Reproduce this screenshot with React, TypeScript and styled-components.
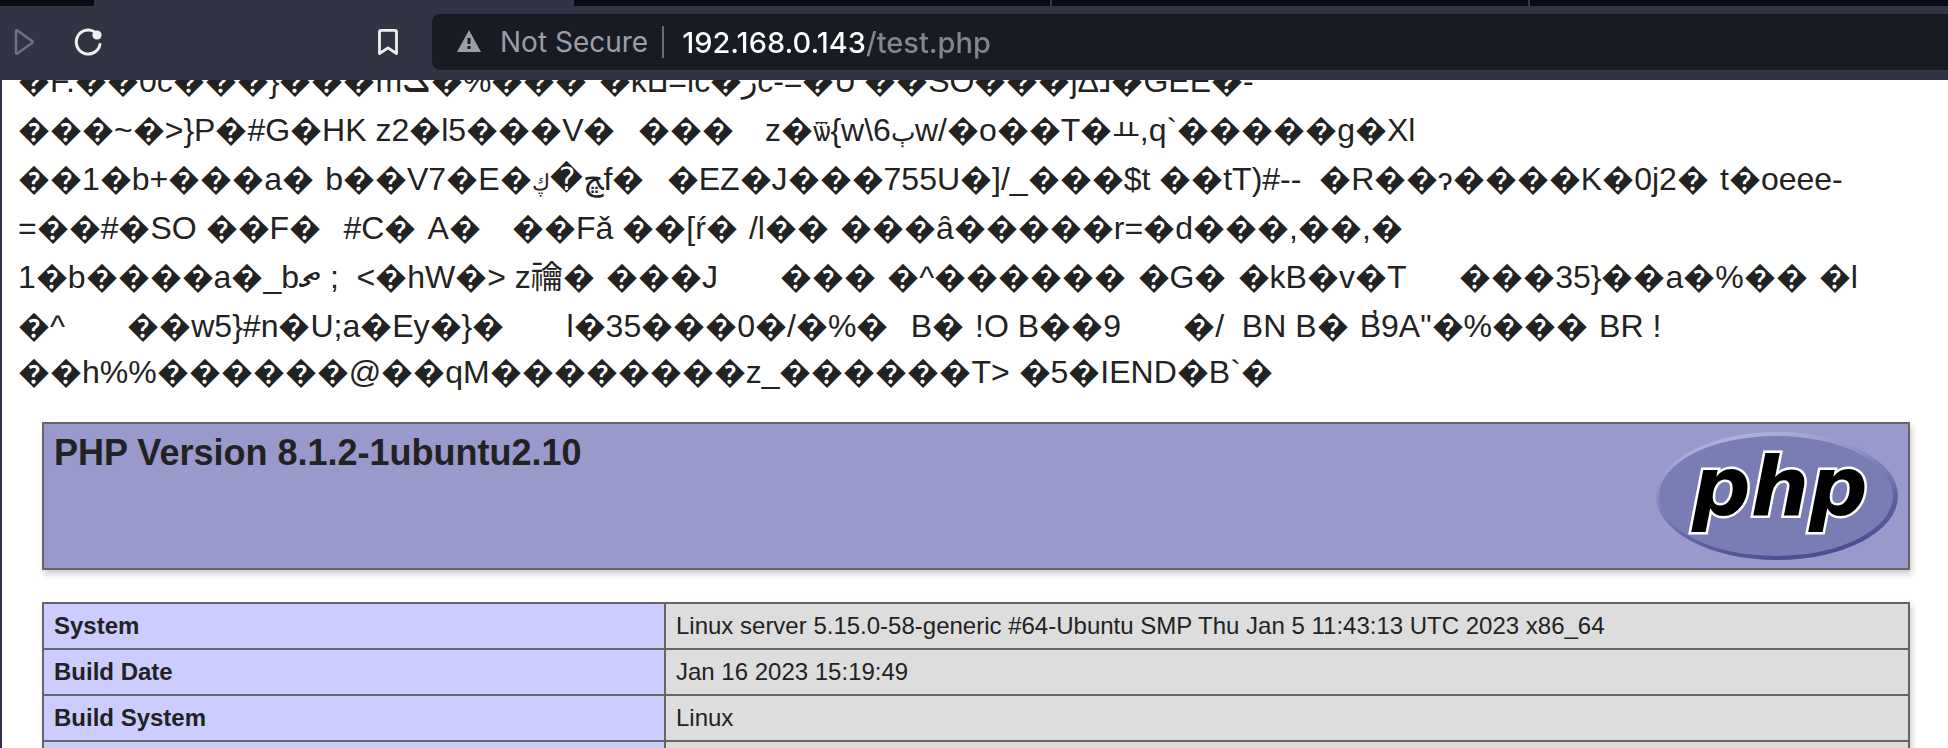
import React from "react";
import styled, { createGlobalStyle } from "styled-components";

const Global = createGlobalStyle`
  * { box-sizing: border-box; }
  body { margin: 0; background: #fff; }
`;

const Window = styled.div`
  display: flex;
  flex-direction: column;
  height: 100vh;
  overflow: hidden;
`;

const TabStrip = styled.div`
  display: flex;
  flex: none;
  height: 6px;
  background: #0b0b15;
`;

const Tab = styled.div<{ $width: number; $active?: boolean; $divided?: boolean }>`
  width: ${(p) => p.$width}px;
  background: ${(p) => (p.$active ? "#323444" : "transparent")};
  border-right: ${(p) => (p.$divided ? "2px solid #3a3a3d" : "none")};
`;

const Toolbar = styled.header`
  display: flex;
  flex: none;
  align-items: center;
  height: 74px;
  padding: 0 0 2px 8px;
  background: #323444;
`;

const IconButton = styled.button<{ $color: string; $push?: boolean }>`
  display: grid;
  place-items: center;
  width: 32px;
  height: 40px;
  padding: 0;
  margin-left: ${(p) => (p.$push ? "236px" : "0")};
  margin-right: ${(p) => (p.$push ? "28px" : "32px")};
  border: 0;
  background: none;
  color: ${(p) => p.$color};
`;

const AddressBar = styled.div`
  display: flex;
  flex: 1;
  align-items: center;
  height: 56px;
  padding-left: 24px;
  border-radius: 8px 0 0 8px;
  background: #181b23;
  font-family: Inter, "Liberation Sans", sans-serif;
  font-size: 28px;
`;

const Security = styled.button`
  display: flex;
  align-items: center;
  gap: 18px;
  height: 32px;
  padding: 0 14px 0 0;
  border: 0;
  border-right: 2px solid #6b6d74;
  background: none;
  color: #9b9ea7;
  font: inherit;
  white-space: nowrap;
`;

const Address = styled.input`
  flex: 1;
  min-width: 0;
  height: 40px;
  margin-left: 18px;
  padding: 0;
  border: 0;
  outline: 0;
  background: linear-gradient(90deg, #fff 183px, #85868b 183px);
  background-clip: text;
  -webkit-background-clip: text;
  color: transparent;
  font-family: inherit;
  font-size: 29px;
  font-weight: 500;
`;

const Page = styled.main`
  flex: 1;
  min-height: 0;
  overflow: hidden;
  border-left: 2px solid #2f334a;
  background: #fff;
  color: #222;
  font-family: "Liberation Sans", Arial, "Noto Sans CJK JP", sans-serif;
`;

const RawOutput = styled.div`
  margin: -23px 0 29px;
  padding-left: 16px;
  font-size: 32px;
`;

const RawLine = styled.div<{ $last?: boolean }>`
  height: ${(p) => (p.$last ? 42 : 49)}px;
  line-height: ${(p) => (p.$last ? 42 : 49)}px;
  direction: ltr;
  unicode-bidi: bidi-override;
  white-space: pre;
`;

const WideSpace = styled.span`
  font-family: "DejaVu Sans", sans-serif;
  font-weight: 700;
  line-height: 0;
`;

const Glyph = styled.span<{ $size: number }>`
  font-size: ${(p) => p.$size}px;
  line-height: 0;
`;

const Info = styled.div`
  display: flex;
  flex-direction: column;
  gap: 32px;
  padding: 0 38px 0 40px;
`;

const Banner = styled.section`
  display: flex;
  justify-content: space-between;
  align-items: flex-start;
  padding: 8px 10px;
  border: 2px solid #666;
  background: #9999cc;
  box-shadow: 2px 4px 6px #ccc;
`;

const Title = styled.h1`
  margin: 0;
  font-size: 36px;
  line-height: 42px;
`;

const Table = styled.table`
  width: 100%;
  table-layout: fixed;
  border-collapse: collapse;
  box-shadow: 2px 4px 6px #ccc;
  font-size: 24px;
  line-height: 28px;
`;

const Name = styled.th`
  width: calc(100% / 3);
  height: 46px;
  padding: 8px 10px;
  border: 2px solid #666;
  background: #ccccff;
  text-align: left;
`;

const Value = styled.td`
  padding: 8px 10px;
  border: 2px solid #666;
  background: #ddd;
`;

const lines = [
  "�F.��0c���}���mܠ�%��� �kם=ic�زc-=�ט ��SO���jΔנ�GEE�-",
  "���~�>}P�#G�HK z2�l5���V�  ���   z�ѿ{w\\6ٻw/�o��T�ㅛ,q`�����g�Xl",
  "��1�b+���a� b��V7�E�ڮ�ڇf�  �EZ�J���755U�]/_���$t ��tT)#--  �R��ɂ����K�0j2� t�oeee-",
  "=��#�SO ��F�  #C� A�   ��Fǎ ��[ŕ� /l�� ���ȃ�����r=�d���,��,�",
  "1�b����a�_bތ ;  <�hW�> z禴� ���J       ��� �^������ �G� �kB�v�T      ���35}��a�%�� �l",
  "�^       ��w5}#n�U;a�Ey�}�       l�35���0�/�%�  B� !O B��9       �/  BN B� B\u031B9A\"�%��� BR !",
  "��h%%������@��qM��������z_������T> �5�IEND�B`�",
];

// Letters whose fallback face is drawn much larger or smaller than the Latin text
const glyphSizes: Record<string, number> = { "ܠ": 44, "ѿ": 28, "ٻ": 26, "ڮ": 22, "ތ": 44, "ㅛ": 30 };

// Up to two spaces that follow a replacement character take the wider face
const pieces = (line: string) =>
  line.split(/((?<=\uFFFD) {1,2}(?= ?[^ ])|[ܠѿٻڮތㅛ])/u).map((part, i) => {
    if (i % 2 === 0) return part;
    if (part[0] === " ") return <WideSpace key={i}>{part}</WideSpace>;
    return (
      <Glyph key={i} $size={glyphSizes[part]}>
        {part}
      </Glyph>
    );
  });

const rows = [
  ["System", "Linux server 5.15.0-58-generic #64-Ubuntu SMP Thu Jan 5 11:43:13 UTC 2023 x86_64"],
  ["Build Date", "Jan 16 2023 15:19:49"],
  ["Build System", "Linux"],
  ["", ""],
];

const ForwardIcon = () => (
  <svg width="22" height="30" viewBox="0 0 22 30" fill="none" stroke="currentColor" strokeWidth="2.6" strokeLinejoin="round">
    <path d="M3 4.500Q3 2.500 5 4L19 14Q20 15 19 16L5 26Q3 27.500 3 25.500Z" />
  </svg>
);

const ReloadIcon = () => (
  <svg width="30" height="30" viewBox="0 0 30 30" fill="none">
    <path d="M21 4.500A12 12 0 1 0 27 17.500" stroke="currentColor" strokeWidth="3" strokeLinecap="round" />
    <circle cx="24" cy="8" r="4.600" fill="currentColor" />
  </svg>
);

const BookmarkIcon = () => (
  <svg width="22" height="30" viewBox="0 0 22 30" fill="none" stroke="currentColor" strokeWidth="2.800" strokeLinejoin="round">
    <path d="M2.500 5Q2.500 3.400 4.200 3.400H17.800Q19.500 3.400 19.500 5V26.500L11 20.800L2.500 26.500Z" />
  </svg>
);

const WarningIcon = () => (
  <svg width="26" height="28" viewBox="0 0 26 28">
    <path d="M13 2L25 24H1Z" fill="#9b9ea7" />
    <path d="M13 10V16M13 18V21" stroke="#181b23" strokeWidth="3" />
  </svg>
);

const PhpLogo = () => (
  <svg width="242" height="128" viewBox="0 0 242 128" role="img" aria-label="PHP logo">
    <defs>
      <linearGradient id="rim" x1="0.3" y1="0" x2="0.7" y2="1">
        <stop offset="0" stopColor="#b3b6dc" />
        <stop offset="0.300" stopColor="#8f92c4" />
        <stop offset="0.700" stopColor="#5c5fa0" />
        <stop offset="1" stopColor="#484b8c" />
      </linearGradient>
    </defs>
    <ellipse cx="121" cy="64" rx="121" ry="64" fill="url(#rim)" />
    <ellipse cx="120" cy="64" rx="117" ry="60" fill="#7a7db3" />
    <text
      x="36"
      y="83"
      fontFamily="'DejaVu Sans', sans-serif"
      fontSize="82"
      fontWeight="700"
      fontStyle="italic"
      fill="#000"
      stroke="#fff"
      strokeWidth="5"
      paintOrder="stroke"
    >
      php
    </text>
  </svg>
);

export default function App() {
  return (
    <Window>
      <Global />
      <TabStrip>
        <Tab $width={94} />
        <Tab $width={480} $active />
        <Tab $width={478} $divided />
        <Tab $width={478} $divided />
      </TabStrip>
      <Toolbar>
        <IconButton $color="#6f717d" aria-label="Forward">
          <ForwardIcon />
        </IconButton>
        <IconButton $color="#f0f0f0" aria-label="Reload">
          <ReloadIcon />
        </IconButton>
        <IconButton $color="#f0f0f0" $push aria-label="Bookmark this page">
          <BookmarkIcon />
        </IconButton>
        <AddressBar>
          <Security>
            <WarningIcon />
            Not Secure
          </Security>
          <Address aria-label="Address" defaultValue="192.168.0.143/test.php" spellCheck={false} />
        </AddressBar>
      </Toolbar>
      <Page>
        <RawOutput>
          {lines.map((line, i) => (
            <RawLine key={i} $last={i === lines.length - 1}>
              {pieces(line)}
            </RawLine>
          ))}
        </RawOutput>
        <Info>
          <Banner>
            <Title>PHP Version 8.1.2-1ubuntu2.10</Title>
            <PhpLogo />
          </Banner>
          <Table>
            <tbody>
              {rows.map(([name, value], i) => (
                <tr key={i}>
                  <Name scope="row">{name}</Name>
                  <Value>{value}</Value>
                </tr>
              ))}
            </tbody>
          </Table>
        </Info>
      </Page>
    </Window>
  );
}
